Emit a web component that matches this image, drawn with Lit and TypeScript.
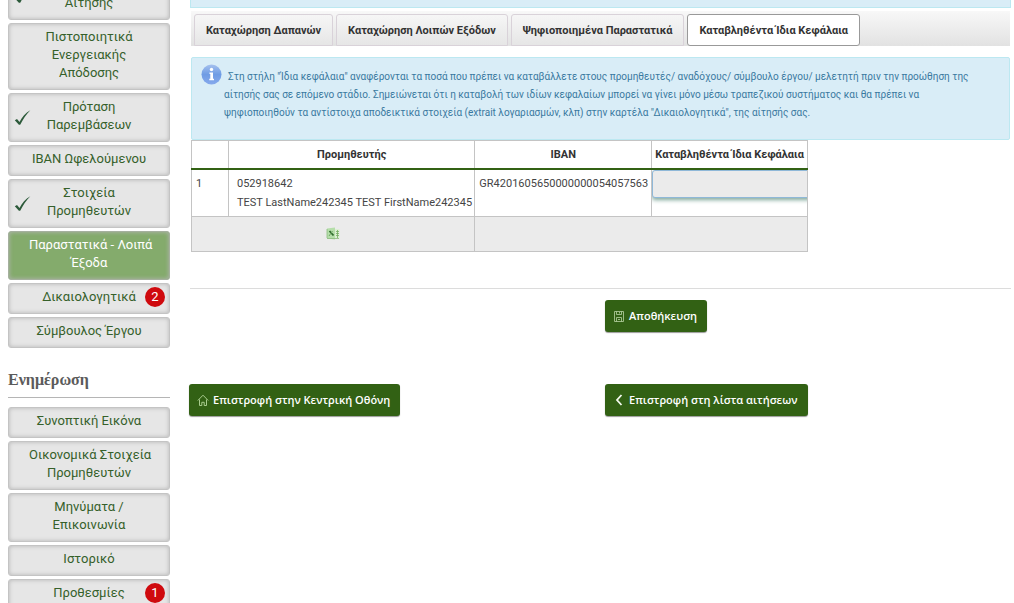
import { LitElement, html, css, svg, nothing } from "lit";
import { customElement, property, state } from "lit/decorators.js";
import { classMap } from "lit/directives/class-map.js";

interface MenuEntry {
  lines: string[];
  done?: boolean;
  active?: boolean;
  count?: number;
}

const APPLICATION: MenuEntry[] = [
  { lines: ["Στοιχεία", "Αίτησης"], done: true },
  { lines: ["Πιστοποιητικά", "Ενεργειακής", "Απόδοσης"] },
  { lines: ["Πρόταση", "Παρεμβάσεων"], done: true },
  { lines: ["IBAN Ωφελούμενου"] },
  { lines: ["Στοιχεία", "Προμηθευτών"], done: true },
  { lines: ["Παραστατικά - Λοιπά", "Έξοδα"], active: true },
  { lines: ["Δικαιολογητικά"], count: 2 },
  { lines: ["Σύμβουλος Έργου"] },
];

const UPDATES: MenuEntry[] = [
  { lines: ["Συνοπτική Εικόνα"] },
  { lines: ["Οικονομικά Στοιχεία", "Προμηθευτών"] },
  { lines: ["Μηνύματα /", "Επικοινωνία"] },
  { lines: ["Ιστορικό"] },
  { lines: ["Προθεσμίες"], count: 1 },
];

const TABS = [
  "Καταχώρηση Δαπανών",
  "Καταχώρηση Λοιπών Εξόδων",
  "Ψηφιοποιημένα Παραστατικά",
  "Καταβληθέντα Ίδια Κεφάλαια",
];

@customElement("side-menu")
class SideMenu extends LitElement {
  @property({ attribute: false }) entries: MenuEntry[] = [];

  static styles = css`
    :host { display: block; }
    .list { display: flex; flex-direction: column; gap: 3px; margin: 0; padding: 0; list-style: none; }
    .item {
      position: relative; display: block; box-sizing: border-box;
      padding: 4px 20px 7px; border: 1px solid #c4c4c4; border-radius: 3px;
      background: #e6e6e6; box-shadow: inset 0 0 4px #b4b4b4;
      color: #35602a; font-size: 13px; line-height: 18px;
      text-align: center; text-decoration: none; white-space: nowrap;
    }
    .item.active { background: #84ab6c; color: #fff; border-color: #a5b09e; }
    .check { position: absolute; left: 5px; top: 50%; margin-top: -9px; width: 17px; height: 17px; }
    .count {
      position: absolute; right: 4px; top: 3px; width: 20px; height: 20px;
      border-radius: 50%; background: #cf0a0e; color: #fff; line-height: 20px;
    }
  `;

  render() {
    return html`<ul class="list">
      ${this.entries.map(
        (e) => html`<li>
          <a href="#" class=${classMap({ item: true, active: !!e.active })}>
            ${e.done
              ? html`<svg class="check" viewBox="0 0 17 17" aria-hidden="true">
                  <path d="M.8 11.300 L3 10.100 L5.500 13 C8 8 11.500 4 16.300 1.200 C12.300 5.200 8.800 10.500 6.200 15.800 L4.900 15.800 Z" fill="#2c5a3a" />
                </svg>`
              : nothing}
            ${e.lines.map((l, i) => (i ? html`<br />${l}` : l))}
            ${e.count ? html`<span class="count">${e.count}</span>` : nothing}
          </a>
        </li>`
      )}
    </ul>`;
  }
}

const ICONS: Record<string, unknown> = {
  save: svg`<g fill="none" stroke="#b9d3a3" stroke-width=".8"><path d="M1.500 1.500h9v10h-9z"/><path d="M3.500 1.500v3h5v-3M6.500 2v1.500M3.500 11.500v-4h5v4M5 9.500h2"/></g>`,
  home: svg`<path d="M.8 6.500 6 1.200l5.200 5.300M2.500 5.500v6h2.300V8.300h2.400v3.200h2.300v-6" fill="none" stroke="#a9cc8e" stroke-width="1"/>`,
  back: svg`<path d="M8.500 1 4 6l4.500 5" fill="none" stroke="#f4faef" stroke-width="1.800"/>`,
};

@customElement("action-button")
class ActionButton extends LitElement {
  @property() icon = "save";
  @property() label = "";

  static styles = css`
    :host { display: block; }
    .btn {
      display: flex; align-items: center; gap: 4px; height: 32px; padding: 0 10px 0 8px;
      border: 0; border-radius: 3px; background: #326114; color: #fff;
      box-shadow: 0 1px 1px #9a9a9a; white-space: nowrap;
      font: 600 11px "Open Sans", sans-serif; cursor: pointer;
    }
    .icon { width: 12px; height: 12px; }
  `;

  render() {
    return html`<button class="btn" type="button">
      <svg class="icon" viewBox="0 0 12 12" aria-hidden="true">${ICONS[this.icon]}</svg>${this.label}
    </button>`;
  }
}

@customElement("app-root")
class AppRoot extends LitElement {
  @state() private tab = 3;

  static styles = css`
    :host {
      display: block; height: 100vh; overflow: hidden; background: #fff;
      font-family: Roboto, sans-serif; color: #333;
    }
    .page { display: grid; grid-template-columns: 162px minmax(0, 1fr); gap: 20px; padding: 0 3px 0 8px; }
    .side { margin-top: -29px; }
    .heading {
      margin: 21px 0 9px; padding-bottom: 6px; border-bottom: 1px solid #b5b5b5;
      font: 700 16px/22px "Roboto Slab", "Liberation Serif", serif; color: #5b5b5b;
    }
    .notice { height: 7px; border: solid #bce8f1; border-width: 0 1px 1px; background: #d9edf7; }
    .inset { margin: 3px 1px 0; }
    .tabs {
      display: flex; gap: 3px; box-sizing: border-box; height: 35px; padding: 3px 3px 0;
      background: linear-gradient(#f8f8f8, #e2e2e2);
    }
    .tab {
      box-sizing: border-box; height: 32px; padding: 0 11px; border: 1px solid #d9d2d9;
      border-radius: 3px 3px 0 0; background: linear-gradient(#f6f6f6, #e6e6e6);
      font: 700 11px Roboto, sans-serif; color: #333; white-space: nowrap;
    }
    .tab.active { background: #fff; border-color: #999; border-radius: 3px; }
    .info {
      display: flex; gap: 2px; margin-top: 11px; padding: 6px 20px 17px 9px;
      border: 1px solid #bce8f1; border-radius: 2px; background: #d9edf7;
      color: #3a79a0; font-size: 10px; line-height: 18px;
    }
    .info-icon { flex: none; width: 21px; height: 21px; }
    .info-text { margin: 4px 0 0; text-indent: 4px; }
    .grid { width: 617px; border-collapse: collapse; table-layout: fixed; font-size: 11px; line-height: 19px; }
    .grid th, .grid td { box-sizing: border-box; border: 1px solid #c4c4c4; padding: 4px; vertical-align: top; color: #444; }
    .grid th { height: 28px; padding: 0; border-bottom: 2px solid #326114; vertical-align: middle; font-weight: 700; white-space: nowrap; color: #333; }
    .grid .who { padding-left: 8px; white-space: nowrap; }
    .grid .amount { padding: 0; overflow: hidden; }
    .field {
      display: block; box-sizing: border-box; width: 170px; height: 28px;
      border: 1px solid #8fb8d8; border-radius: 3px; background: #ebebeb;
      box-shadow: 0 2px 4px #7fa79a; font: 11px Roboto, sans-serif;
    }
    .grid .foot td { height: 35px; padding: 0; background: #ebebeb; vertical-align: middle; text-align: center; }
    .export { display: block; margin: 0 auto; padding: 0; border: 0; background: none; width: 14px; height: 13px; }
    .rule { margin: 36px 0 11px; border: 0; border-top: 1px solid #dcdcdc; }
    .actions { display: grid; grid-template-columns: 1fr 1fr; gap: 52px 10px; justify-items: start; margin: 0 0 0 -1px; }
    .second { grid-column: 2; }
  `;

  render() {
    return html`<div class="page">
      <nav class="side">
        <side-menu .entries=${APPLICATION}></side-menu>
        <h2 class="heading">Ενημέρωση</h2>
        <side-menu .entries=${UPDATES}></side-menu>
      </nav>
      <main>
        <div class="notice"></div>
        <div class="inset">
          <div class="tabs" role="tablist">
            ${TABS.map(
              (t, i) => html`<button
                type="button" role="tab" aria-selected=${i === this.tab}
                class=${classMap({ tab: true, active: i === this.tab })}
                @click=${() => (this.tab = i)}
              >${t}</button>`
            )}
          </div>
          <div class="info">
            <svg class="info-icon" viewBox="0 0 21 21" aria-hidden="true">
              <defs>
                <linearGradient id="ball" x2="0" y2="1">
                  <stop offset="0" stop-color="#a5c1ee" />
                  <stop offset=".5" stop-color="#6f9ce4" />
                  <stop offset="1" stop-color="#86a9ec" />
                </linearGradient>
              </defs>
              <circle cx="10.500" cy="10.500" r="10" fill="url(#ball)" />
              <circle cx="10.500" cy="5.500" r="1.700" fill="#fff" />
              <path d="M8.500 8.500h3.500v6.300h1v1.400H8.300v-1.400h1V9.900h-.8z" fill="#fff" />
            </svg>
            <p class="info-text">
              Στη στήλη "Ίδια κεφάλαια" αναφέρονται τα ποσά που πρέπει να καταβάλλετε στους προμηθευτές/ αναδόχους/ σύμβουλο έργου/ μελετητή πριν την προώθηση της αίτησής σας σε επόμενο στάδιο. Σημειώνεται ότι η καταβολή των ιδίων κεφαλαίων μπορεί να γίνει μόνο μέσω τραπεζικού συστήματος και θα πρέπει να ψηφιοποιηθούν τα αντίστοιχα αποδεικτικά στοιχεία (extrait λογαριασμών, κλπ) στην καρτέλα "Δικαιολογητικά", της αίτησής σας.
            </p>
          </div>
          <table class="grid">
            <colgroup>
              <col style="width:6%" /><col style="width:40%" /><col style="width:28.700%" /><col />
            </colgroup>
            <thead>
              <tr><th></th><th>Προμηθευτής</th><th>IBAN</th><th id="own">Καταβληθέντα Ίδια Κεφάλαια</th></tr>
            </thead>
            <tbody>
              <tr>
                <td>1</td>
                <td class="who">052918642<br />TEST LastName242345 TEST FirstName242345</td>
                <td>GR4201605650000000054057563</td>
                <td class="amount"><input class="field" type="text" aria-labelledby="own" /></td>
              </tr>
              <tr class="foot">
                <td colspan="2">
                  <button class="export" type="button" aria-label="Excel">
                    <svg width="14" height="13" viewBox="0 0 14 13" aria-hidden="true">
                      <path d="M1 1.500 9 .5v12L1 11.500z" fill="#b5deaa" />
                      <path d="M9 2h4.500v9.500H9z" fill="#dcefd4" />
                      <path d="M10 4.500h3M10 6.500h3M10 8.500h3M11.500 3v8" stroke="#75ad62" stroke-width=".8" />
                      <path d="M3.500 4 7.500 8.500" stroke="#2d6b2b" stroke-width="1.800" />
                      <path d="M6.500 4 3 9" stroke="#6fa565" stroke-width="1" />
                      <path d="M1 11.500h12M1 2v9" stroke="#8cba7e" stroke-width=".8" />
                    </svg>
                  </button>
                </td>
                <td colspan="2"></td>
              </tr>
            </tbody>
          </table>
        </div>
        <hr class="rule" />
        <div class="actions">
          <action-button class="second" icon="save" label="Αποθήκευση"></action-button>
          <action-button icon="home" label="Επιστροφή στην Κεντρική Οθόνη"></action-button>
          <action-button icon="back" label="Επιστροφή στη λίστα αιτήσεων"></action-button>
        </div>
      </main>
    </div>`;
  }
}
